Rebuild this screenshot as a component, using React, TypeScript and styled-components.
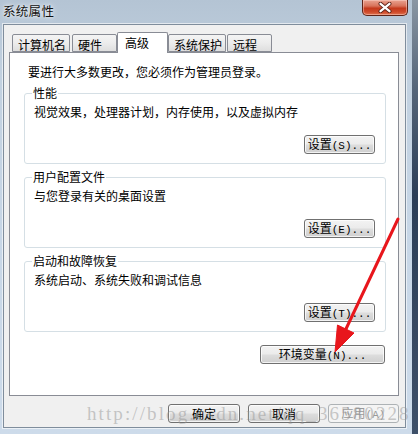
import React from "react";
import styled, { createGlobalStyle } from "styled-components";

const Global = createGlobalStyle`
  html, body { margin: 0; padding: 0; }
  body {
    width: 418px; height: 434px; overflow: hidden;
    background: #34465c;
    font-family: "Noto Sans CJK SC", "Noto Sans", sans-serif;
    color: #000;
  }
`;

const Screen = styled.div`
  display: flex;
  width: 418px;
  height: 434px;
`;

const Window = styled.div`
  position: relative;
  flex: none;
  width: 412px;
  height: 434px;
  box-sizing: border-box;
  display: flex;
  flex-direction: column;
  padding: 0 6px 6px 3px;
  background: linear-gradient(180deg, #b4c4d4 0%, #c2d1e0 18%, #c8d7e7 60%, #cddbea 100%);
`;

const DesktopStrip = styled.div`
  flex: 1;
  background: linear-gradient(180deg, #8a96a3 0%, #56667a 20%, #2c3e57 45%, #3e5069 100%);
`;

const TitleBar = styled.div`
  height: 24px;
  flex: none;
  display: flex;
  justify-content: space-between;
  align-items: flex-start;
`;

const Title = styled.div`
  padding-top: 4px;
  font-size: 12.5px;
  line-height: 14px;
  letter-spacing: 0.3px;
  color: #111;
  text-shadow: 0 0 6px rgba(255, 255, 255, 0.9), 0 0 3px rgba(255, 255, 255, 0.8);
`;

const CloseButton = styled.div`
  width: 46px;
  height: 16px;
  margin-right: -2px;
  box-sizing: border-box;
  display: flex;
  align-items: center;
  justify-content: center;
  border: 1px solid #5e2418;
  border-top: none;
  border-radius: 0 0 5px 5px;
  background: linear-gradient(180deg, #e9a391 0%, #d8735b 40%, #c4391c 55%, #cf4b2b 80%, #e07552 100%);
  box-shadow: inset 0 0 0 1px rgba(255, 220, 210, 0.45);
`;

const Client = styled.div`
  flex: 1;
  display: flex;
  flex-direction: column;
  box-sizing: border-box;
  padding: 7px 6px 0 5px;
  background: #f0f0f0;
  border: 1px solid #7f8d9c;
  box-shadow: 0 0 0 1px rgba(255, 255, 255, 0.6);
`;

const TabStrip = styled.div`
  display: flex;
  align-items: flex-end;
  height: 20px;
  padding-left: 3px;
  position: relative;
  z-index: 1;
`;

const Tab = styled.div<{ $w: number; $ml?: number; $active?: boolean }>`
  box-sizing: border-box;
  width: ${(p) => p.$w}px;
  margin-left: ${(p) => p.$ml ?? 0}px;
  height: ${(p) => (p.$active ? 21 : 18)}px;
  margin-bottom: ${(p) => (p.$active ? -1 : 0)}px;
  align-self: ${(p) => (p.$active ? "flex-start" : "flex-end")};
  padding: ${(p) => (p.$active ? "3px 0 0 7px" : "3px 0 0 5px")};
  font-size: 12px;
  line-height: 14px;
  white-space: nowrap;
  border: 1px solid #898c95;
  border-bottom: ${(p) => (p.$active ? "none" : "1px solid #898c95")};
  border-radius: 2px 2px 0 0;
  background: ${(p) =>
    p.$active ? "#ffffff" : "linear-gradient(180deg, #f4f4f4 0%, #ececec 50%, #dedede 100%)"};
`;

const Panel = styled.div`
  box-sizing: border-box;
  height: 344px;
  display: flex;
  flex-direction: column;
  padding: 12px 12px 0 14px;
  background: #ffffff;
  border: 1px solid #898c95;
`;

const Intro = styled.div`
  font-size: 12px;
  line-height: 14px;
  margin-left: 4px;
  white-space: nowrap;
`;

const Group = styled.fieldset<{ $mt: number }>`
  margin: ${(p) => p.$mt}px 0 0 0;
  min-width: 0;
  padding: 6px 10px 9px 9px;
  border: 1px solid #d5dfe5;
  border-radius: 3px;
`;

const Legend = styled.legend`
  font-size: 12px;
  line-height: 12px;
  padding: 0 1px;
  margin-left: -2px;
`;

const Desc = styled.div`
  font-size: 12px;
  line-height: 14px;
  white-space: nowrap;
`;

const ButtonRow = styled.div<{ $mt: number; $mr?: number; $gap?: number }>`
  display: flex;
  justify-content: flex-end;
  gap: ${(p) => p.$gap ?? 0}px;
  margin-top: ${(p) => p.$mt}px;
  margin-right: ${(p) => p.$mr ?? 0}px;
`;

const Button = styled.div<{ $w: number; $disabled?: boolean }>`
  box-sizing: border-box;
  width: ${(p) => p.$w}px;
  height: 19px;
  display: flex;
  align-items: center;
  justify-content: center;
  font-size: 12px;
  line-height: 17px;
  white-space: nowrap;
  border-radius: 3px;
  color: ${(p) => (p.$disabled ? "#9a9a9a" : "#000")};
  border: 1px solid ${(p) => (p.$disabled ? "#adb2b5" : "#707070")};
  background: ${(p) =>
    p.$disabled
      ? "#f4f4f4"
      : "linear-gradient(180deg, #f3f3f3 0%, #ebebeb 48%, #dddddd 52%, #cfcfcf 100%)"};
  box-shadow: ${(p) => (p.$disabled ? "none" : "inset 0 0 0 1px rgba(255,255,255,0.75)")};
`;

const Ascii = styled.span`
  font-family: "Liberation Mono", "DejaVu Sans Mono", monospace;
  font-size: 11px;
`;

const BottomRow = styled.div`
  display: flex;
  justify-content: flex-end;
  gap: 8px;
  margin-top: 8px;
`;

const Watermark = styled.div`
  position: absolute;
  left: 87px;
  top: 404px;
  font-family: "Liberation Serif", serif;
  font-size: 19px;
  line-height: 19px;
  letter-spacing: 2.1px;
  color: rgba(150, 150, 150, 0.5);
  white-space: nowrap;
  pointer-events: none;
`;

const Overlay = styled.svg`
  position: absolute;
  left: 0;
  top: 0;
  pointer-events: none;
`;

const Label: React.FC<{ cjk: string; key_: string }> = ({ cjk, key_ }) => (
  <span>
    {cjk}
    <Ascii>({key_})...</Ascii>
  </span>
);

export default function App() {
  return (
    <>
      <Global />
      <Screen>
        <Window>
          <TitleBar>
            <Title>系统属性</Title>
            <CloseButton>
              <svg width="16" height="11" viewBox="0 0 16 11">
                <path d="M3.5 1.8 L12.5 9.2 M12.5 1.8 L3.5 9.2" stroke="#5a2016" strokeWidth="4" strokeLinecap="round" />
                <path d="M3.5 1.8 L12.5 9.2 M12.5 1.8 L3.5 9.2" stroke="#ffffff" strokeWidth="2.3" strokeLinecap="round" />
              </svg>
            </CloseButton>
          </TitleBar>
          <Client>
            <TabStrip>
              <Tab $w={58}>计算机名</Tab>
              <Tab $w={45} $ml={2}>硬件</Tab>
              <Tab $w={51} $active>高级</Tab>
              <Tab $w={58}>系统保护</Tab>
              <Tab $w={45} $ml={1}>远程</Tab>
            </TabStrip>
            <Panel>
              <Intro>要进行大多数更改，您必须作为管理员登录。</Intro>
              <Group $mt={8}>
                <Legend>性能</Legend>
                <Desc>视觉效果，处理器计划，内存使用，以及虚拟内存</Desc>
                <ButtonRow $mt={16}>
                  <Button $w={71}><Label cjk="设置" key_="S" /></Button>
                </ButtonRow>
              </Group>
              <Group $mt={7}>
                <Legend>用户配置文件</Legend>
                <Desc>与您登录有关的桌面设置</Desc>
                <ButtonRow $mt={16}>
                  <Button $w={71}><Label cjk="设置" key_="E" /></Button>
                </ButtonRow>
              </Group>
              <Group $mt={7}>
                <Legend>启动和故障恢复</Legend>
                <Desc>系统启动、系统失败和调试信息</Desc>
                <ButtonRow $mt={16}>
                  <Button $w={71}><Label cjk="设置" key_="T" /></Button>
                </ButtonRow>
              </Group>
              <ButtonRow $mt={13} $mr={1}>
                <Button $w={125}><Label cjk="环境变量" key_="N" /></Button>
              </ButtonRow>
            </Panel>
            <BottomRow>
              <Button $w={72}>确定</Button>
              <Button $w={72}>取消</Button>
              <Button $w={71} $disabled>
                <span>应用<Ascii>(A)</Ascii></span>
              </Button>
            </BottomRow>
          </Client>
          <Watermark>http://blog.csdn.net/qq_36580228</Watermark>
          <Overlay width="412" height="434" viewBox="0 0 412 434">
            <line x1="398" y1="219" x2="345" y2="331" stroke="#e8161c" strokeWidth="3" strokeLinecap="round" />
            <polygon points="335,352 337.5,325 354,333" fill="#e8161c" stroke="#e8161c" strokeWidth="1" strokeLinejoin="round" />
          </Overlay>
        </Window>
        <DesktopStrip />
      </Screen>
    </>
  );
}
